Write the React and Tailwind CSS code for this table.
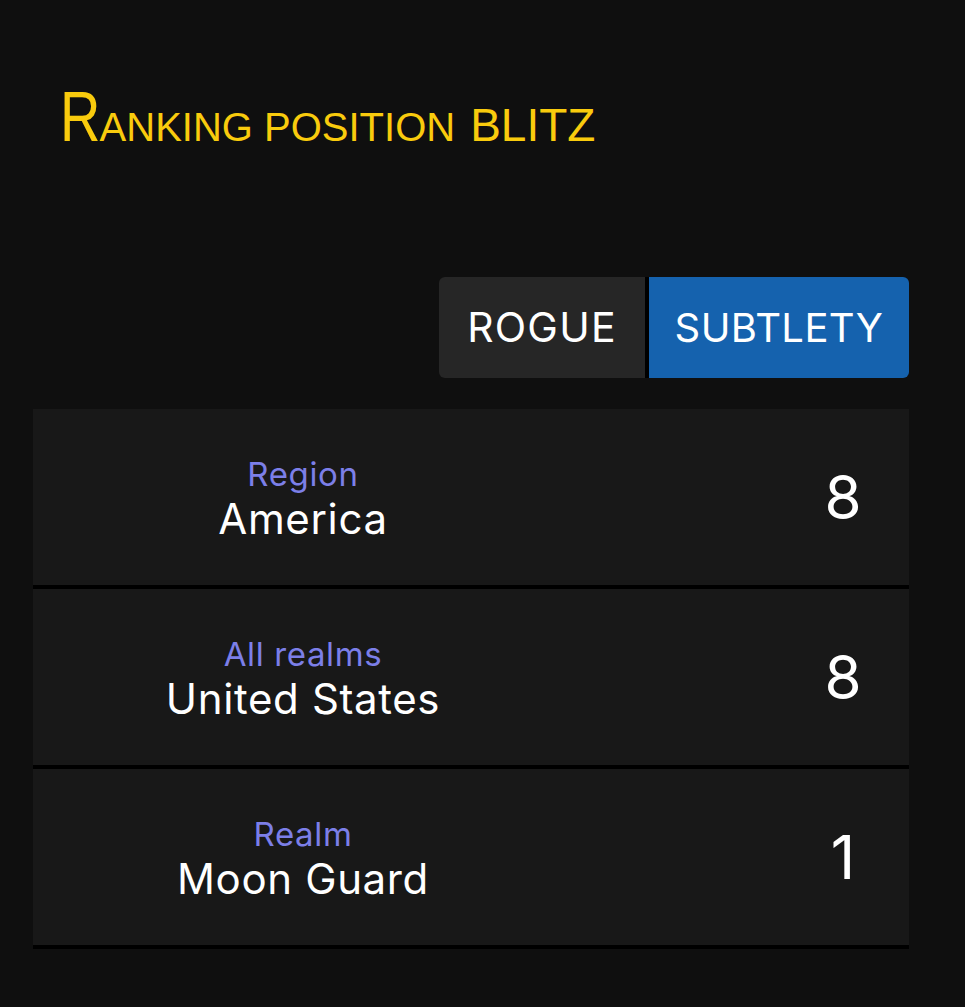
const ranks = [
  { label: 'Region', value: 'America', pos: '8' },
  { label: 'All realms', value: 'United States', pos: '8' },
  { label: 'Realm', value: 'Moon Guard', pos: '1' },
];

const App = () => {
  return (
    <div className="min-h-[1007px] bg-[#0f0f0f] pl-[33px] pr-[56px] font-['Inter',sans-serif] text-white">
      {/* Title */}
      <h1 className="pl-[27px] pt-[82px] font-['Liberation_Sans',Arial,sans-serif] text-[40px] leading-none text-[#f9cb0d]">
        <span className="-mr-[11px] inline-block origin-left scale-x-[0.8] text-[70px]">R</span>
        <span className="uppercase">anking position</span>
        <span className="ml-[15px] text-[46px]">BLITZ</span>
      </h1>

      {/* Spec tabs */}
      <div className="mt-[125px] flex justify-end">
        <div className="flex overflow-hidden rounded-[6px]">
          <button className="h-[101px] w-[210px] border-r-4 border-black bg-[#262626] text-[41px] tracking-[0.03em] text-white">
            ROGUE
          </button>
          <button className="h-[101px] w-[260px] bg-[#1562ae] text-[40px] tracking-[0.01em] text-white">
            SUBTLETY
          </button>
        </div>
      </div>

      {/* Ranking rows */}
      <div className="mt-[31px]">
        {ranks.map((r) => (
          <div key={r.label} className="box-border flex h-[180px] items-center border-b-4 border-black bg-[#181818]">
            <div className="flex w-[540px] flex-col items-center pt-[6px] tracking-[0.04em]">
              <span className="text-[33px] leading-[1.15] text-[#7c7fe8]">{r.label}</span>
              <span className="text-[42px] leading-[1.2] text-white">{r.value}</span>
            </div>
            <div className="ml-auto w-[132px] text-center text-[60px] leading-none">{r.pos}</div>
          </div>
        ))}
      </div>
    </div>
  );
};

export default App;
